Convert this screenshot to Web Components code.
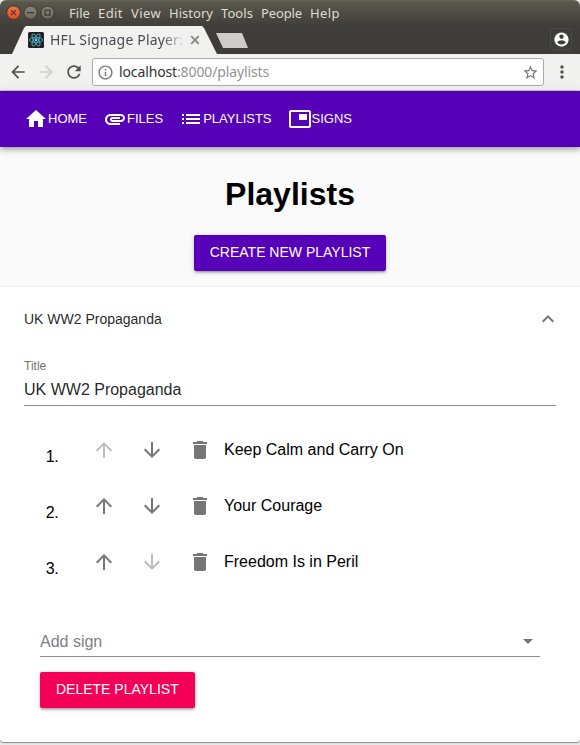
<!DOCTYPE html>
<html lang="en">
<head>
<meta charset="utf-8">
<title>HFL Signage Player</title>
<style>
html,body{margin:0;height:745px;overflow:hidden;background:#e9e9e9}
body{font-family:"Liberation Sans",Arial,sans-serif;color:#000}
</style>
</head>
<body>
<app-window>
  <window-titlebar slot="chrome"></window-titlebar>
  <tab-strip slot="chrome"></tab-strip>
  <url-bar slot="chrome"></url-bar>
  <nav-bar>
    <nav-link icon="home">HOME</nav-link>
    <nav-link icon="clip">FILES</nav-link>
    <nav-link icon="list">PLAYLISTS</nav-link>
    <nav-link icon="pip">SIGNS</nav-link>
  </nav-bar>
  <page-header heading="Playlists"><raised-button>CREATE NEW PLAYLIST</raised-button></page-header>
  <playlist-panel heading="UK WW2 Propaganda">
    <text-field label="Title">UK WW2 Propaganda</text-field>
    <sign-list>
      <sign-row number="1." first>Keep Calm and Carry On</sign-row>
      <sign-row number="2.">Your Courage</sign-row>
      <sign-row number="3." last>Freedom Is in Peril</sign-row>
    </sign-list>
    <select-field>Add sign</select-field>
    <raised-button class="delete" style="--button:#f50057">DELETE PLAYLIST</raised-button>
  </playlist-panel>
</app-window>
<script>
const ICONS = {
  home:'M10 20v-6h4v6h5v-8h3L12 3 2 12h3v8z',
  clip:'M2 12.5C2 9.46 4.46 7 7.5 7H18c2.21 0 4 1.79 4 4s-1.79 4-4 4H9.5C8.12 15 7 13.88 7 12.5S8.12 10 9.5 10H17v2H9.41c-.55 0-.55 1 0 1H18c1.1 0 2-.9 2-2s-.9-2-2-2H7.5C5.57 9 4 10.57 4 12.5S5.57 16 7.5 16H17v2H7.5C4.46 18 2 15.54 2 12.5z',
  list:'M3 13h2v-2H3v2zm0 4h2v-2H3v2zm0-8h2V7H3v2zm4 4h14v-2H7v2zm0 4h14v-2H7v2zM7 7v2h14V7H7z',
  pip:'M19 7h-8v6h8V7zm2-4H3c-1.1 0-2 .9-2 2v14c0 1.1.9 1.98 2 1.98h18c1.1 0 2-.88 2-1.98V5c0-1.1-.9-2-2-2zm0 16.01H3V4.98h18v14.03z',
  up:'M4 12l1.41 1.41L11 7.83V20h2V7.83l5.58 5.59L20 12l-8-8-8 8z',
  down:'M20 12l-1.41-1.41L13 16.17V4h-2v12.17l-5.58-5.59L4 12l8 8 8-8z',
  trash:'M6 19c0 1.1.9 2 2 2h8c1.1 0 2-.9 2-2V7H6v12zM19 4h-3.5l-1-1h-5l-1 1H5v2h14V4z',
  less:'M12 8l-6 6 1.41 1.41L12 10.83l4.59 4.58L18 14z',
  caret:'M7 10l5 5 5-5z',
  back:'M20 11H7.83l5.59-5.59L12 4l-8 8 8 8 1.41-1.41L7.83 13H20v-2z',
  forward:'M12 4l-1.41 1.41L16.17 11H4v2h12.17l-5.58 5.59L12 20l8-8z',
  reload:'M17.65 6.35C16.2 4.9 14.21 4 12 4c-4.42 0-7.99 3.58-7.99 8s3.57 8 7.99 8c3.73 0 6.84-2.55 7.73-6h-2.08c-.82 2.33-3.04 4-5.65 4-3.31 0-6-2.69-6-6s2.69-6 6-6c1.66 0 3.14.69 4.22 1.78L13 11h7V4l-2.35 2.35z',
  info:'M11 17h2v-6h-2v6zm1-15C6.48 2 2 6.48 2 12s4.48 10 10 10 10-4.48 10-10S17.52 2 12 2zm0 18c-4.41 0-8-3.59-8-8s3.59-8 8-8 8 3.59 8 8-3.59 8-8 8zM11 9h2V7h-2v2z',
  star:'M22 9.24l-7.19-.62L12 2 9.19 8.63 2 9.24l5.46 4.73L5.82 21 12 17.27 18.18 21l-1.63-7.03L22 9.24zM12 15.4l-3.76 2.27 1-4.28-3.32-2.88 4.38-.38L12 6.1l1.71 4.04 4.38.38-3.32 2.88 1 4.28L12 15.4z',
  more:'M12 8c1.1 0 2-.9 2-2s-.9-2-2-2-2 .9-2 2 .9 2 2 2zm0 2c-1.1 0-2 .9-2 2s.9 2 2 2 2-.9 2-2-.9-2-2-2zm0 6c-1.1 0-2 .9-2 2s.9 2 2 2 2-.9 2-2-.9-2-2-2z',
  person:'M12 2C6.48 2 2 6.48 2 12s4.48 10 10 10 10-4.48 10-10S17.52 2 12 2zm0 3c1.66 0 3 1.34 3 3s-1.34 3-3 3-3-1.34-3-3 1.34-3 3-3zm0 14.2c-2.5 0-4.71-1.28-6-3.22.03-1.99 4-3.08 6-3.08 1.99 0 5.97 1.09 6 3.08-1.29 1.94-3.5 3.22-6 3.22z'
};
const define = (name, html, setup) => customElements.define(name, class extends HTMLElement {
  connectedCallback() {
    if (this.shadowRoot) return;
    this.attachShadow({mode:'open'}).innerHTML = typeof html === 'function' ? html(this) : html;
    if (setup) setup(this);
  }
});

define('m-icon', el => `<style>:host{display:block;flex:none;width:${el.getAttribute('size')||24}px;height:${el.getAttribute('size')||24}px}svg{display:block;width:100%;height:100%}</style>
<svg viewBox="0 0 24 24" fill="currentColor"><path d="${ICONS[el.getAttribute('name')]}"/></svg>`);

// Distributes tracking so that a label occupies exactly its given width.
define('fit-label', `<style>:host{display:block;flex:none;white-space:nowrap}span{display:inline-block}</style><span><slot></slot></span>`, el => {
  const want = +el.getAttribute('w'), s = el.shadowRoot.querySelector('span');
  const n = el.textContent.length;
  s.style.letterSpacing = (want - s.getBoundingClientRect().width) / n + 'px';
  el.style.width = want + 'px';
});

define('app-window', `<style>:host{display:flex;flex-direction:column;width:580px;height:742px;border-radius:6px 6px 4px 4px;overflow:hidden;background:#fafafa;box-shadow:0 1px 1px #8a8a8a}
</style><slot name="chrome"></slot><slot></slot>`);

define('window-titlebar', `<style>
:host{display:flex;align-items:center;flex:none;height:26px;padding-left:6px;background:linear-gradient(#6a675c 0,#5a574d 2px,#3f3e39 100%);color:#dfdbd2;font:13px "Noto Sans","Open Sans",sans-serif}
svg{flex:none;width:50px;height:26px;margin-right:13px}
nav{display:flex;gap:8px;padding-bottom:1px}
</style>
<svg viewBox="0 0 50 26"><defs><linearGradient id="r" x2="0" y2="1"><stop stop-color="#f4774d"/><stop offset="1" stop-color="#df4a1b"/></linearGradient><linearGradient id="g" x2="0" y2="1"><stop stop-color="#8a877c"/><stop offset="1" stop-color="#6b685f"/></linearGradient></defs>
<g stroke="#35342f" stroke-width=".8"><circle cx="7.5" cy="12.7" r="6.8" fill="url(#r)"/><circle cx="24.5" cy="12.7" r="6.5" fill="url(#g)"/><circle cx="41.5" cy="12.7" r="6.5" fill="url(#g)"/></g>
<path d="M5 10.2l5 5m0-5l-5 5M21 12.7h7M39 10.2h5v5h-5z" fill="none" stroke="#42372f" stroke-width="1.2"/></svg>
<nav><fit-label w="21">File</fit-label><fit-label w="25">Edit</fit-label><fit-label w="30">View</fit-label><fit-label w="44">History</fit-label><fit-label w="32">Tools</fit-label><fit-label w="41">People</fit-label><fit-label w="30">Help</fit-label></nav>`);

define('tab-strip', `<style>
:host{display:flex;flex:none;height:28px;background:#3e3d39;font:14px "Noto Sans","Open Sans",sans-serif;color:#4b4a52}
.tab{display:flex;align-items:center;box-sizing:border-box;width:205px;margin-left:12px;padding-left:16px;background:#f1f1f0;clip-path:polygon(0 100%,12px 2px,14px 0,190px 0,192px 2px,100% 100%)}
.logo{width:16px;height:16px;margin-right:6px}
.name{width:134px;padding-bottom:2px;-webkit-mask:linear-gradient(90deg,#000 84%,transparent 101%);mask:linear-gradient(90deg,#000 84%,transparent 101%)}
.x{width:10px;height:10px;margin-left:6px}
.new{width:32px;height:15px;margin:7px 0 0 -1px;background:#cdcccb;clip-path:polygon(0 0,26px 0,100% 100%,7px 100%)}
.who{display:grid;place-items:center;width:20px;height:20px;border:1px solid #4b4a46;border-radius:3px;margin:2px 8px 0 auto;color:#fff}
</style>
<div class="tab"><svg class="logo" viewBox="0 0 16 16"><rect width="16" height="16" rx="1.5" fill="#222"/><g fill="none" stroke="#53b8d4" stroke-width=".8"><ellipse cx="8" cy="8" rx="6.8" ry="2.5"/><ellipse cx="8" cy="8" rx="6.8" ry="2.5" transform="rotate(60 8 8)"/><ellipse cx="8" cy="8" rx="6.8" ry="2.5" transform="rotate(120 8 8)"/></g><circle cx="8" cy="8" r="1.4" fill="#61dafb"/></svg>
<div class="name"><fit-label w="133">HFL Signage Player:</fit-label></div>
<svg class="x" viewBox="0 0 10 10"><path d="M1.2 1.2l7.6 7.6m0-7.6l-7.6 7.6" stroke="#858585" stroke-width="1.8"/></svg></div>
<div class="new"></div><div class="who"><m-icon name="person" size="17"></m-icon></div>`);

define('url-bar', `<style>
:host{display:flex;align-items:center;box-sizing:border-box;flex:none;height:37px;padding:0 8px;background:#f1f1f0;border-bottom:1px solid #c9c8cc;color:#505050}
.fwd{color:#cecece;margin-left:8px}.re{margin-left:8px}
.box{display:flex;align-items:center;box-sizing:border-box;width:452px;height:28px;margin-left:8px;padding:0 4px;border:1px solid #aaa;border-radius:3px;background:#fff;font:14px "Noto Sans","Open Sans",sans-serif;color:#333}
.box m-icon{color:#757575}.host{margin-left:5px}.path{color:#929292}fit-label{padding-bottom:2px}.star{margin-left:auto}
.more{margin-left:8px}
</style><m-icon name="back" size="20"></m-icon><m-icon class="fwd" name="forward" size="20"></m-icon><m-icon class="re" name="reload" size="20"></m-icon>
<div class="box"><m-icon name="info" size="17"></m-icon><fit-label class="host" w="58">localhost</fit-label><fit-label class="path" w="92">:8000/playlists</fit-label><m-icon class="star" name="star" size="17"></m-icon></div>
<m-icon class="more" name="more" size="20"></m-icon>`);

define('nav-bar', `<style>:host{display:flex;align-items:center;gap:16px;box-sizing:border-box;flex:none;height:56px;padding:0 24px;background:#5600b8;color:#fff;position:relative;z-index:1;box-shadow:0 2px 4px -1px rgba(0,0,0,.2),0 4px 5px rgba(0,0,0,.14),0 1px 10px rgba(0,0,0,.12)}</style><slot></slot>`);

define('nav-link', el => `<style>:host{display:flex;align-items:center;font-size:13px;line-height:15px}span{padding-bottom:2px}</style><m-icon name="${el.getAttribute('icon')}"></m-icon><span><slot></slot></span>`);

define('page-header', el => `<style>:host{display:flex;flex-direction:column;align-items:center;box-sizing:border-box;flex:none;height:140px;padding-top:29px}
h1{margin:0 0 22px;font-size:32px;line-height:37px}</style><h1>${el.getAttribute('heading')}</h1><slot></slot>`);

define('raised-button', `<style>:host{display:flex;align-items:center;box-sizing:border-box;width:max-content;height:36px;padding:0 16px 2px;border-radius:2px;background:var(--button,#5600b8);color:#fff;font-size:14px;line-height:16px;white-space:nowrap;box-shadow:0 1px 5px rgba(0,0,0,.2),0 2px 2px rgba(0,0,0,.14),0 3px 1px -2px rgba(0,0,0,.12)}</style><slot></slot>`);

define('playlist-panel', el => `<style>:host{display:block;flex:1;background:#fff;box-shadow:0 0 1px rgba(0,0,0,.3)}
header{display:flex;align-items:center;justify-content:space-between;height:64px;padding:0 20px 0 24px;font-size:14px;color:rgba(0,0,0,.87)}
m-icon{color:#757575}section{padding:8px 24px 0}
::slotted(.delete){margin:15px 0 0 16px}</style>
<header>${el.getAttribute('heading')}<m-icon name="less"></m-icon></header><section><slot></slot></section>`);

define('text-field', el => `<style>:host{display:block;box-sizing:border-box;height:47px;border-bottom:1px solid #8c8c8c}
label{display:block;font-size:12px;line-height:14px;color:#757575}
div{font-size:16px;line-height:19px;padding-top:7px;color:rgba(0,0,0,.87)}</style><label>${el.getAttribute('label')}</label><div><slot></slot></div>`);

define('sign-list', `<style>:host{display:block;padding-top:16px}</style><slot></slot>`);

define('sign-row', el => `<style>:host{display:flex;align-items:center;height:56px;font-size:16px;line-height:20px}
.n{width:34px;padding-top:13px;text-align:right;letter-spacing:-.6px}
.tools{display:flex;gap:24px;margin:0 12px 0 34px;color:#757575}.off{color:#bdbdbd}</style>
<span class="n">${el.getAttribute('number')}</span><div class="tools"><m-icon name="up" class="${el.hasAttribute('first')?'off':''}"></m-icon><m-icon name="down" class="${el.hasAttribute('last')?'off':''}"></m-icon><m-icon name="trash"></m-icon></div><span><slot></slot></span>`);

define('select-field', `<style>:host{display:flex;align-items:center;justify-content:space-between;box-sizing:border-box;height:31px;margin:36px 16px 0;border-bottom:1px solid #8c8c8c;font-size:16px;line-height:18px;color:#808080}span{padding-top:2px}m-icon{color:#757575}</style><span><slot></slot></span><m-icon name="caret"></m-icon>`);
</script>
</body>
</html>
